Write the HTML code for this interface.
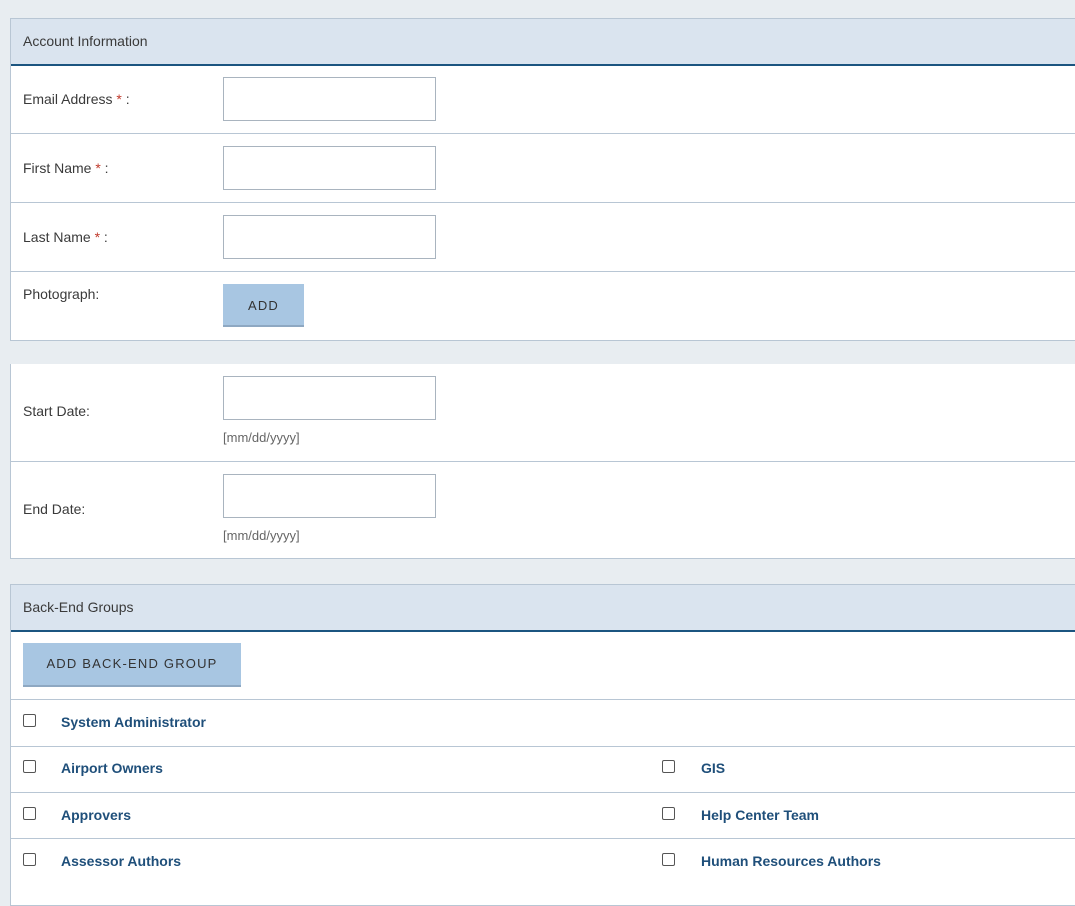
<!DOCTYPE html>
<html><head><style>
body{margin:0;width:1075px;height:883px;background:#e8edf1;font-family:"Liberation Sans",sans-serif;font-size:14px;color:#3a3a3a;overflow:hidden;position:relative}
.a{position:absolute}
.panel{position:absolute;left:10px;right:-2px;background:#fff;border:1px solid #b8c6d4}
.hd{position:absolute;left:0;right:0;top:0;height:45px;background:#dae4ef;border-bottom:2px solid #1b5580}
.ln{position:absolute;left:0;right:0;height:1px;background:#b8c6d4}
.inp{position:absolute;left:212px;width:211px;height:42px;border:1px solid #a9b4bf;background:#fff}
.btn{position:absolute;background:#a8c6e2;border-bottom:2px solid #8ea8c2;color:#333;letter-spacing:1.2px;font-size:13px;text-align:center}
.req{color:#c0392b}
.cb{position:absolute;width:11px;height:11px;border:1px solid #555;border-radius:2px;background:#fff}
.g{position:absolute;font-weight:bold;color:#1f4f7a;font-size:14px}
.hint{position:absolute;left:212px;color:#666;font-size:13px}
</style></head><body>
<div class="panel" style="top:18px;height:321px">
 <div class="hd"></div>
 <div class="a" style="left:12px;top:14px">Account Information</div>
 <div class="a" style="left:12px;top:72px">Email Address <span class="req">*</span> :</div>
 <div class="inp" style="top:58px"></div>
 <div class="ln" style="top:114px"></div>
 <div class="a" style="left:12px;top:141px">First Name <span class="req">*</span> :</div>
 <div class="inp" style="top:127px"></div>
 <div class="ln" style="top:183px"></div>
 <div class="a" style="left:12px;top:210px">Last Name <span class="req">*</span> :</div>
 <div class="inp" style="top:196px"></div>
 <div class="ln" style="top:252px"></div>
 <div class="a" style="left:12px;top:267px">Photograph:</div>
 <div class="btn" style="left:212px;top:265px;width:81px;height:41px;line-height:44px">ADD</div>
</div>
<div class="panel" style="top:364px;height:194px;border-top:none">
 <div class="a" style="left:12px;top:39px">Start Date:</div>
 <div class="inp" style="top:12px"></div>
 <div class="hint" style="top:66px">[mm/dd/yyyy]</div>
 <div class="ln" style="top:97px"></div>
 <div class="a" style="left:12px;top:137px">End Date:</div>
 <div class="inp" style="top:110px"></div>
 <div class="hint" style="top:164px">[mm/dd/yyyy]</div>
</div>
<div class="panel" style="top:584px;height:320px">
 <div class="hd"></div>
 <div class="a" style="left:12px;top:14px">Back-End Groups</div>
 <div class="btn" style="left:12px;top:58px;width:218px;height:42px;line-height:42px">ADD BACK-END GROUP</div>
 <div class="ln" style="top:114px"></div>
 <div class="cb" style="left:12px;top:129px"></div><div class="g" style="left:50px;top:129px">System Administrator</div>
 <div class="ln" style="top:161px"></div>
 <div class="cb" style="left:12px;top:175px"></div><div class="g" style="left:50px;top:175px">Airport Owners</div>
 <div class="cb" style="left:651px;top:175px"></div><div class="g" style="left:690px;top:175px">GIS</div>
 <div class="ln" style="top:207px"></div>
 <div class="cb" style="left:12px;top:222px"></div><div class="g" style="left:50px;top:222px">Approvers</div>
 <div class="cb" style="left:651px;top:222px"></div><div class="g" style="left:690px;top:222px">Help Center Team</div>
 <div class="ln" style="top:253px"></div>
 <div class="cb" style="left:12px;top:268px"></div><div class="g" style="left:50px;top:268px">Assessor Authors</div>
 <div class="cb" style="left:651px;top:268px"></div><div class="g" style="left:690px;top:268px">Human Resources Authors</div>
</div>
</body></html>
